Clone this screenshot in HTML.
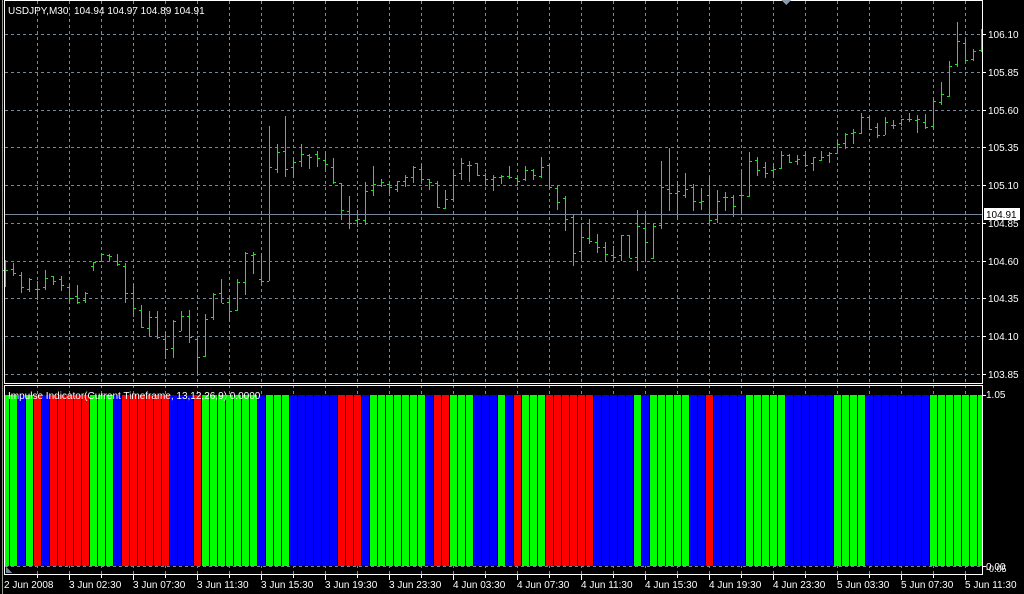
<!DOCTYPE html>
<html><head><meta charset="utf-8">
<style>
html,body{margin:0;padding:0;background:#000;width:1024px;height:594px;overflow:hidden}
svg{display:block}
text{font-family:"Liberation Sans",sans-serif;font-size:10px;fill:#fff}
</style></head>
<body>
<svg id="s" width="1024" height="594" viewBox="0 0 1024 594" xmlns="http://www.w3.org/2000/svg" shape-rendering="crispEdges">
<rect width="1024" height="594" fill="#000"/>
<g id="grid"></g>
<g id="ind"></g>
<g id="bars"></g>
<line x1="4" y1="214.5" x2="982" y2="214.5" stroke="#778899"/>
<!-- frames -->
<rect x="4.5" y="0.5" width="978" height="383" fill="none" stroke="#fff"/>
<rect x="4.5" y="385.5" width="978" height="189" fill="none" stroke="#fff"/>
<line x1="2.5" y1="0" x2="2.5" y2="594" stroke="#9a9a90"/>
<polygon points="781,0 791,0 786,5" fill="#8a9aa8"/>
<polygon points="6,567 6,573 12,573" fill="#778899"/>
<g id="ticks"></g>
<text x="8" y="14">USDJPY,M30&#160; 104.94 104.97 104.89 104.91</text>
<text x="8" y="399">Impulse Indicator(Current Timeframe, 13,12,26,9) 0.0000</text>
<rect x="984" y="208" width="36" height="12" fill="#fff"/>
<g id="plabels"></g>
<text x="986" y="398">1.05</text>
<text x="986" y="570">0.00</text>
<text x="986" y="572" style="font-size:9px">-0.05</text>
<g id="tlabels"></g>
</svg>
<script>
var NS="http://www.w3.org/2000/svg";
function el(p,t,a,txt){var e=document.createElementNS(NS,t);for(var k in a)e.setAttribute(k,a[k]);if(txt)e.textContent=txt;document.getElementById(p).appendChild(e);return e;}
// grid
var gy=[34,72,110,147,185,223,261,298,336,374];
gy.forEach(function(y){el("grid","line",{x1:5,y1:y+.5,x2:982,y2:y+.5,stroke:"#778899","stroke-dasharray":"3,3"});});
el("grid","line",{x1:5,y1:566.5,x2:982,y2:566.5,stroke:"#778899","stroke-dasharray":"3,3"});
for(var x=37;x<982;x+=32){
 el("grid","line",{x1:x+.5,y1:1,x2:x+.5,y2:574,stroke:"#778899","stroke-dasharray":"3,3"});
 el("ticks","line",{x1:x+.5,y1:575,x2:x+.5,y2:((x-5)%64==0)?580:578,stroke:"#fff"});
}
// price labels
var pl=["106.10","105.85","105.60","105.35","105.10","104.85","104.60","104.35","104.10","103.85"];
pl.forEach(function(t,i){var y=gy[i];if(t!="104.85")el("plabels","text",{x:988,y:y+4},t);else el("plabels","text",{x:988,y:y+4},t);el("ticks","line",{x1:983,y1:y+.5,x2:986,y2:y+.5,stroke:"#fff"});});
el("plabels","text",{x:986,y:218,style:"fill:#000"},"104.91");
el("ticks","line",{x1:983,y1:395.5,x2:986,y2:395.5,stroke:"#fff"});
el("ticks","line",{x1:983,y1:566.5,x2:986,y2:566.5,stroke:"#fff"});
// time labels
var tl=["2 Jun 2008","3 Jun 02:30","3 Jun 07:30","3 Jun 11:30","3 Jun 15:30","3 Jun 19:30","3 Jun 23:30","4 Jun 03:30","4 Jun 07:30","4 Jun 11:30","4 Jun 15:30","4 Jun 19:30","4 Jun 23:30","5 Jun 03:30","5 Jun 07:30","5 Jun 11:30"];
tl.forEach(function(t,i){el("tlabels","text",{x:i==0?4:5+64*i,y:588},t);});
// indicator
var cs="GGBGRBRRRRRGGGBRRRRRRBBBRGGGGGGGBGGGBBBBBBRRRBGGGGGGGBRRGGGBBBGBRGGGRRRRRRBBBBBGBGGGGGBBRBBBBGGGGGBBBBBBGGGGBBBBBBBBGGGGGGG";
var col={G:"#00ff00",R:"#ff0000",B:"#0000ff"};
for(var j=0;j<cs.length;j++){var x0=2+8*j,x1=x0+7;if(x0<5)x0=5;if(x1>982)x1=982;if(x1>x0)el("ind","rect",{x:x0,y:395,width:x1-x0,height:171,fill:col[cs[j]]});}
// price bars: [H,L,O,C] in zoom coords
var A=[[450,532,480,480],[458,496,478,490],[486,550,495,532],[505,548,538,508],[512,568,538,538],[480,540,532,505],[498,526,498,512],[498,542,508,525],[522,582,532,565],[525,582,558,575],[546,578,570,550],[455,482,468,455],[428,452,452,432],[432,452,436,438],[432,468,452,462],[458,578,468,548],[522,620,548,595],[586,655,600,650],[604,680,655,620],[604,688,622,682],[665,745,688,716],[630,745,715,632],[604,665,664,618],[600,698,618,682],[686,788,688,742],[612,742,738,628],[548,630,622,552],[508,580,548,578],[560,636,575,602],[508,605,600,515],[426,556,516,428],[425,490,436,432],[432,528,508,512],[48,512,512,172],[102,188,178,126],[18,200,122,178],[145,206,172,155],[102,170,152,132],[132,178,135,140],[124,172,132,145]];
var B=[[128,182,150,162],[145,222,170,215],[218,330,218,300],[258,358,302,338],[300,350,330,328],[216,346,330,244],[168,258,240,222],[208,232,226,216],[216,252,222,232],[212,244,236,214],[196,232,214,200],[168,218,200,172],[162,218,178,206],[208,242,208,216],[212,294,218,292],[240,296,294,268],[178,276,266,196],[145,210,188,160],[152,216,164,164],[158,196,160,196],[190,226,196,206],[196,244,208,202],[196,224,200,198],[168,208,198,200],[198,224,204,212],[168,214,208,180],[176,208,180,194],[142,204,198,172],[162,236,164,232],[226,302,234,276],[258,364,264,326],[312,468,322,428],[344,446,424,382],[326,400,384,392],[372,428,396,410],[396,452,412,432],[408,454,436,440],[376,454,434,376],[376,446,376,444],[300,482,442,348],[308,454,354,396]];
var C=[[639,747,744,648],[452,655,645,532],[414,602,536,548],[514,632,548,544],[490,565,555,536],[522,604,530,574],[535,602,576,574],[500,640,556,630],[540,638,626,574],[546,602,560,560],[556,622,562,588],[480,610,556,556],[426,560,558,454],[440,496,450,480],[456,504,470,488],[460,506,480,476],[424,478,474,434],[432,460,436,456],[434,464,452,448],[428,470,436,464],[440,482,458,442],[424,454,450,440],[426,460,436,430],[390,430,428,402],[370,418,400,372],[356,400,370,366],[310,372,368,320],[316,360,320,356],[338,382,350,376],[322,376,376,336],[330,358,344,344],[326,346,340,328],[308,336,326,326],[314,368,330,326],[312,356,336,352],[262,362,348,272],[216,284,276,252],[152,260,258,168],[36,172,162,94],[86,152,98,150],[118,154,146,122],[58,128,120,118]];
var all=[];
A.forEach(function(a){all.push(a.map(function(v){return 110+v/3;}));});
B.forEach(function(a){all.push(a.map(function(v){return 110+v/3;}));});
C.forEach(function(a){all.push(a.map(function(v){return 10+v/3;}));});
var g="#19e619";
all.forEach(function(b,j){var x=5+8*j;if(x>981)return;
 el("bars","rect",{x:x,y:Math.round(b[0]),width:1,height:Math.max(1,Math.round(b[1]-b[0])),fill:g});
 el("bars","rect",{x:x-2,y:Math.round(b[2]),width:2,height:1,fill:g});
 if(x+3<982)el("bars","rect",{x:x+1,y:Math.round(b[3]),width:2,height:1,fill:g});
});
</script>
</body></html>
